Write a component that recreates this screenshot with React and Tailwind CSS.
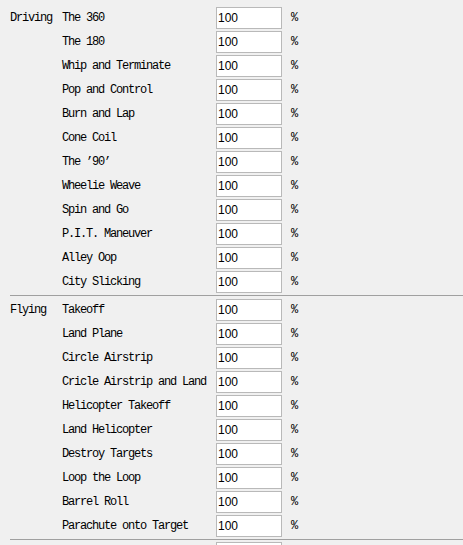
import React from 'react';

const sections = [
  {
    title: 'Driving',
    items: [
      'The 360',
      'The 180',
      'Whip and Terminate',
      'Pop and Control',
      'Burn and Lap',
      'Cone Coil',
      'The ’90’',
      'Wheelie Weave',
      'Spin and Go',
      'P.I.T. Maneuver',
      'Alley Oop',
      'City Slicking',
    ],
  },
  {
    title: 'Flying',
    items: [
      'Takeoff',
      'Land Plane',
      'Circle Airstrip',
      'Cricle Airstrip and Land',
      'Helicopter Takeoff',
      'Land Helicopter',
      'Destroy Targets',
      'Loop the Loop',
      'Barrel Roll',
      'Parachute onto Target',
    ],
  },
  {
    title: '',
    items: [''],
  },
];

const mono = "font-['Liberation_Mono',monospace] text-[12px] tracking-[-1.2px] text-black";

const Row = ({ title, name, last }) => (
  <div className="flex items-center h-[22px]">
    <div className={`w-[52px] whitespace-pre ${mono}`}>{title}</div>
    <div className={`w-[154px] whitespace-pre ${mono}`}>{name}</div>
    <input
      type="text"
      defaultValue={last ? '' : '100'}
      className="w-[66px] h-[22px] bg-white border border-[#b9b9b9] px-[1px] text-[12px] text-black font-['Liberation_Sans',sans-serif] outline-none"
    />
    {!last && <div className={`ml-[9px] ${mono}`}>%</div>}
  </div>
);

export default function App() {
  return (
    <div className="w-[463px] h-[545px] overflow-hidden bg-[#f0f0f0] pl-[10px] pt-[7px]">
      {sections.map((section, si) => {
        const last = si === sections.length - 1;
        return (
          <div key={si}>
            {si > 0 && (
              <div className={`border-t border-[#a0a0a0] mt-[2px] ${last ? 'mb-[2px]' : 'mb-[3px]'}`} />
            )}
            <div className="flex flex-col gap-[2px]">
              {section.items.map((name, i) => (
                <Row
                  key={name + i}
                  title={i === 0 ? section.title : ''}
                  name={name}
                  last={last}
                />
              ))}
            </div>
          </div>
        );
      })}
    </div>
  );
}
